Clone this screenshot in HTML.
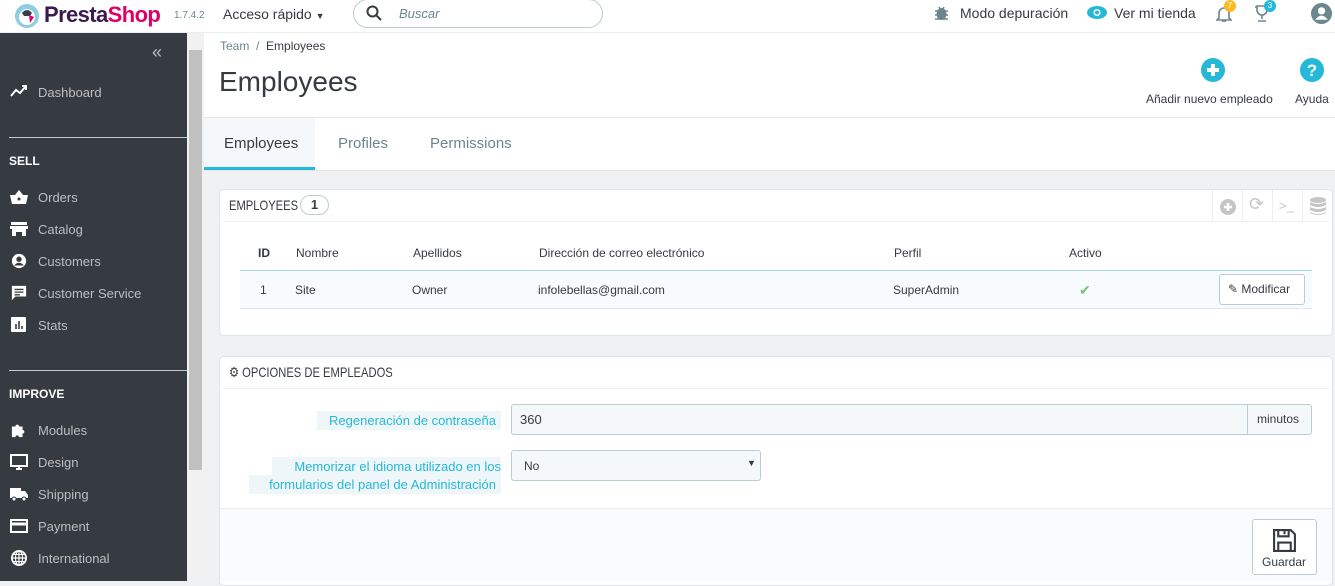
<!DOCTYPE html>
<html><head><meta charset="utf-8"><style>
*{box-sizing:border-box;margin:0;padding:0}
body{width:1335px;height:581px;overflow:hidden;font-family:"Liberation Sans",sans-serif;background:#eff1f2;color:#363a41;position:relative;font-size:13px}
.hdr{position:absolute;left:0;top:0;width:1335px;height:33px;background:#fff;border-bottom:1px solid #eee}
.abs{position:absolute;white-space:nowrap}
.side{position:absolute;left:0;top:33px;width:187px;height:548px;background:#363a41;color:#bebebe}
.side .it{position:absolute;left:10px;font-size:13px;color:#bebebe;display:flex;align-items:center}
.side .it i{display:inline-block;width:18px;height:16px;margin-right:10px;position:relative}
.side .sec{position:absolute;left:9px;color:#fff;font-weight:bold;font-size:12px}
.side hr{position:absolute;left:9px;width:178px;border:0;border-top:1px solid #bbcdd2}
.sb{position:absolute;left:187px;top:33px;width:17px;height:548px;background:#f1f1f1}
.sb div{position:absolute;left:2px;top:17px;width:13px;height:420px;background:#c1c1c1}
.top{position:absolute;left:204px;top:33px;width:1131px;height:138px;background:#fff}
.panel{position:absolute;background:#fff;border:1px solid #dbe6e9;border-radius:5px}
.th{position:absolute;top:246px;font-size:12px;color:#363a41}
.td{position:absolute;top:283px;font-size:12px;color:#363a41}
.lbl{position:absolute;background:#eef6fa;color:#25b9d7;font-size:13px;text-align:right}
</style></head><body>
<div class="hdr">
  <svg class="abs" style="left:14px;top:3px" width="26" height="26" viewBox="0 0 26 26"><circle cx="13" cy="13" r="12" fill="#8fcde0"/><circle cx="13" cy="14" r="8" fill="#fff"/><path d="M8 10q5-6 10 0l-2 3h-6z" fill="#3b3b4f"/><path d="M15 12l5 2-4 6z" fill="#df0067"/></svg>
  <div class="abs" style="left:44px;top:2px;font-size:22px;font-weight:bold;color:#3b1a4f;letter-spacing:-0.6px">Presta<span style="color:#df0067">Shop</span></div>
  <div class="abs" style="left:174px;top:10px;font-size:10px;color:#6c868e">1.7.4.2</div>
  <div class="abs" style="left:223px;top:6px;font-size:14px;color:#363a41">Acceso rápido <span style="font-size:9px">▼</span></div>
  <div class="abs" style="left:353px;top:-1px;width:250px;height:29px;border:1px solid #bbcdd2;border-radius:15px"></div>
  <svg class="abs" style="left:366px;top:5px" width="16" height="16" viewBox="0 0 16 16"><circle cx="6.5" cy="6.5" r="5" fill="none" stroke="#363a41" stroke-width="2"/><path d="M10 10l5 5" stroke="#363a41" stroke-width="2"/></svg>
  <div class="abs" style="left:399px;top:6px;font-size:13px;font-style:italic;color:#6c868e">Buscar</div>
  <svg class="abs" style="left:934px;top:5px" width="15" height="16" viewBox="0 0 15 16"><ellipse cx="7.5" cy="9" rx="5" ry="6" fill="#6c868e"/><path d="M1 6h13M1 10h13M1 14h13M5 2l1 2M10 2l-1 2" stroke="#6c868e" stroke-width="1.5"/></svg>
  <div class="abs" style="left:960px;top:5px;font-size:14px;color:#363a41">Modo depuración</div>
  <svg class="abs" style="left:1087px;top:6px" width="20" height="13" viewBox="0 0 20 13"><ellipse cx="10" cy="6.5" rx="10" ry="6.5" fill="#25b9d7"/><circle cx="10" cy="6.5" r="3.5" fill="#fff"/><circle cx="10" cy="6.5" r="2" fill="#25b9d7"/></svg>
  <div class="abs" style="left:1114px;top:5px;font-size:14px;color:#363a41">Ver mi tienda</div>
  <svg class="abs" style="left:1216px;top:5px" width="16" height="18" viewBox="0 0 16 18"><path d="M3 13V8a5 5 0 0 1 10 0v5l2 2H1z" fill="none" stroke="#6c868e" stroke-width="1.6"/><path d="M6 16h4" stroke="#6c868e" stroke-width="1.6"/></svg>
  <div class="abs" style="left:1224px;top:0;width:12px;height:12px;border-radius:6px;background:#fbbb22;color:#fff;font-size:8px;text-align:center;line-height:12px">7</div>
  <svg class="abs" style="left:1254px;top:5px" width="16" height="18" viewBox="0 0 16 18"><path d="M3 1h10v4a5 5 0 0 1-10 0z M1 2h2v3M15 2h-2v3M8 10v4M4 16h8" fill="none" stroke="#6c868e" stroke-width="1.6"/></svg>
  <div class="abs" style="left:1264px;top:0;width:12px;height:12px;border-radius:6px;background:#25b9d7;color:#fff;font-size:8px;text-align:center;line-height:12px">3</div>
  <svg class="abs" style="left:1311px;top:3px" width="21" height="21" viewBox="0 0 20 20"><circle cx="10" cy="10" r="10" fill="#6c868e"/><circle cx="10" cy="7.5" r="3.5" fill="#fff"/><path d="M4 16q6-8 12 0" fill="#fff"/></svg>
</div>
<div class="side">
  <div class="abs" style="left:152px;top:9px;color:#bebebe;font-size:18px;letter-spacing:-3px">«</div>
  <div class="it" style="top:51px"><i><svg width="18" height="14" viewBox="0 0 18 14"><path d="M1 12l5-6 4 3 6-7M12 2h4v4" fill="none" stroke="#fff" stroke-width="2"/></svg></i>Dashboard</div>
  <hr style="top:104px">
  <div class="sec" style="top:121px">SELL</div>
  <div class="it" style="top:156px"><i><svg width="18" height="16" viewBox="0 0 18 16"><path d="M0 6h18l-2 9H2z M5 6l4-5 4 5" fill="#fff"/><circle cx="9" cy="10" r="1.5" fill="#363a41"/></svg></i>Orders</div>
  <div class="it" style="top:188px"><i><svg width="18" height="16" viewBox="0 0 18 16"><path d="M1 1h16v3H1zM0 5h18v3H0zM2 8h14v7h-4v-4H6v4H2z" fill="#fff"/></svg></i>Catalog</div>
  <div class="it" style="top:220px"><i><svg width="18" height="16" viewBox="0 0 18 18"><circle cx="9" cy="9" r="8" fill="#fff"/><circle cx="9" cy="7" r="3" fill="#363a41"/><path d="M3.5 14q5.5-6 11 0" fill="#363a41"/></svg></i>Customers</div>
  <div class="it" style="top:252px"><i><svg width="18" height="16" viewBox="0 0 18 18"><path d="M1 1h16v12H5l-4 4z" fill="#fff"/><path d="M4 5h10M4 8h10M4 11h6" stroke="#363a41" stroke-width="1.5"/></svg></i>Customer Service</div>
  <div class="it" style="top:284px"><i><svg width="18" height="16" viewBox="0 0 16 16"><rect width="15" height="15" rx="1" fill="#fff"/><path d="M5 12V7M8 12V4M11 12V9" stroke="#363a41" stroke-width="1.6"/></svg></i>Stats</div>
  <hr style="top:337px">
  <div class="sec" style="top:354px">IMPROVE</div>
  <div class="it" style="top:389px"><i><svg width="18" height="16" viewBox="0 0 18 18"><path d="M1 5h4a2 2 0 1 1 4 0h4v4a2 2 0 1 1 0 4v4H9a2 2 0 1 0-4 0H1z" fill="#fff"/></svg></i>Modules</div>
  <div class="it" style="top:421px"><i><svg width="18" height="16" viewBox="0 0 18 16"><rect x="1" y="1" width="16" height="11" fill="none" stroke="#fff" stroke-width="2"/><path d="M6 15h6M9 12v3" stroke="#fff" stroke-width="2"/></svg></i>Design</div>
  <div class="it" style="top:453px"><i><svg width="18" height="16" viewBox="0 0 18 16"><path d="M0 2h11v10H0zM11 5h4l3 4v3h-7z" fill="#fff"/><circle cx="4" cy="13" r="2" fill="#fff" stroke="#363a41"/><circle cx="14" cy="13" r="2" fill="#fff" stroke="#363a41"/></svg></i>Shipping</div>
  <div class="it" style="top:485px"><i><svg width="18" height="16" viewBox="0 0 18 16"><rect x="1" y="2" width="16" height="12" fill="none" stroke="#fff" stroke-width="2"/><path d="M1 6h16" stroke="#fff" stroke-width="3"/></svg></i>Payment</div>
  <div class="it" style="top:517px"><i><svg width="18" height="16" viewBox="0 0 18 18"><circle cx="9" cy="9" r="8" fill="none" stroke="#fff" stroke-width="2"/><path d="M1 9h16M9 1v16M3 5h12M3 13h12" stroke="#fff" stroke-width="1.3"/><ellipse cx="9" cy="9" rx="4" ry="8" fill="none" stroke="#fff" stroke-width="1.3"/></svg></i>International</div>
</div>
<div class="sb"><div></div></div>
<div class="top">
  <div class="abs" style="left:16px;top:6px;font-size:12px;color:#6c868e">Team &nbsp;/ &nbsp;<span style="color:#363a41">Employees</span></div>
  <div class="abs" style="left:15px;top:33px;font-size:28px;color:#363a41">Employees</div>
  <svg class="abs" style="left:997px;top:25px" width="24" height="24" viewBox="0 0 24 24"><circle cx="12" cy="12" r="12" fill="#25b9d7"/><path d="M12 6v12M6 12h12" stroke="#fff" stroke-width="4"/></svg>
  <div class="abs" style="left:942px;top:59px;font-size:12px">Añadir nuevo empleado</div>
  <svg class="abs" style="left:1096px;top:25px" width="24" height="24" viewBox="0 0 24 24"><circle cx="12" cy="12" r="12" fill="#25b9d7"/><text x="12" y="18" text-anchor="middle" font-family="Liberation Sans" font-weight="bold" font-size="17" fill="#fff">?</text></svg>
  <div class="abs" style="left:1091px;top:59px;font-size:12px">Ayuda</div>
  <div class="abs" style="left:0;top:84px;width:1131px;border-top:1px solid #e5e5e5"></div>
  <div class="abs" style="left:0;top:85px;width:111px;height:53px;background:#f4f8fb;border-bottom:4px solid #25b9d7"></div>
  <div class="abs" style="left:20px;top:102px;font-size:15px;color:#363a41">Employees</div>
  <div class="abs" style="left:134px;top:102px;font-size:15px;color:#6c868e">Profiles</div>
  <div class="abs" style="left:226px;top:102px;font-size:15px;color:#6c868e">Permissions</div>
  <div class="abs" style="left:0;top:137px;width:1131px;border-top:1px solid #e5e5e5"></div>
</div>
<div class="panel" style="left:219px;top:189px;width:1114px;height:147px"></div>
<div class="abs" style="left:229px;top:197px;font-size:14px;transform:scaleX(0.8);transform-origin:left">EMPLOYEES</div>
<div class="abs" style="left:300px;top:195px;width:29px;height:20px;border:1px solid #bbcdd2;border-radius:10px;text-align:center;font-weight:bold;font-size:13px;line-height:18px">1</div>
<div class="abs" style="left:223px;top:221px;width:1106px;border-top:1px solid #eee"></div>
<div class="abs" style="left:1212px;top:190px;width:1px;height:31px;background:#eee"></div>
<div class="abs" style="left:1242px;top:190px;width:1px;height:31px;background:#eee"></div>
<div class="abs" style="left:1272px;top:190px;width:1px;height:31px;background:#eee"></div>
<div class="abs" style="left:1302px;top:190px;width:1px;height:31px;background:#eee"></div>
<svg class="abs" style="left:1220px;top:199px" width="16" height="16" viewBox="0 0 16 16"><circle cx="8" cy="8" r="8" fill="#c5c5c5"/><path d="M8 4v8M4 8h8" stroke="#fff" stroke-width="2.5"/></svg>
<div class="abs" style="left:1249px;top:194px;font-size:18px;color:#c5c5c5">⟳</div>
<div class="abs" style="left:1279px;top:198px;font-size:13px;color:#c5c5c5">&gt;_</div>
<svg class="abs" style="left:1310px;top:197px" width="16" height="19" viewBox="0 0 16 19"><ellipse cx="8" cy="3" rx="8" ry="3" fill="#c5c5c5"/><path d="M0 5q8 4 16 0v3q-8 4-16 0zM0 10q8 4 16 0v3q-8 4-16 0zM0 15q8 4 16 0v1q-8 4-16 0z" fill="#c5c5c5"/></svg>
<div class="th" style="left:258px;font-weight:bold">ID</div>
<div class="th" style="left:296px">Nombre</div>
<div class="th" style="left:413px">Apellidos</div>
<div class="th" style="left:539px">Dirección de correo electrónico</div>
<div class="th" style="left:894px">Perfil</div>
<div class="th" style="left:1069px">Activo</div>
<div class="abs" style="left:240px;top:270px;width:1072px;height:39px;background:#f8fbfd;border-top:1px solid #a6dbe8;border-bottom:1px solid #e5e5e5"></div>
<div class="td" style="left:260px">1</div>
<div class="td" style="left:295px">Site</div>
<div class="td" style="left:412px">Owner</div>
<div class="td" style="left:538px">infolebellas@gmail.com</div>
<div class="td" style="left:893px">SuperAdmin</div>
<div class="abs" style="left:1079px;top:282px;color:#72c279;font-size:14px">✔</div>
<div class="abs" style="left:1219px;top:274px;width:86px;height:31px;background:#fff;border:1px solid #bbcdd2;border-radius:3px;font-size:12px;line-height:29px;padding-left:8px">✎ Modificar</div>
<div class="panel" style="left:219px;top:356px;width:1114px;height:230px"></div>
<div class="abs" style="left:229px;top:364px;font-size:14px;transform:scaleX(0.8);transform-origin:left">⚙ OPCIONES DE EMPLEADOS</div>
<div class="abs" style="left:223px;top:388px;width:1106px;border-top:1px solid #eee"></div>
<div class="lbl" style="left:317px;top:411px;width:184px;height:19px;line-height:19px;padding-right:5px">Regeneración de contraseña</div>
<div class="abs" style="left:511px;top:404px;width:801px;height:31px;background:#f5f8f9;border:1px solid #bbcdd2;border-radius:3px"></div>
<div class="abs" style="left:1247px;top:405px;width:1px;height:29px;background:#bbcdd2"></div>
<div class="abs" style="left:520px;top:412px;font-size:13px">360</div>
<div class="abs" style="left:1257px;top:412px;font-size:12px">minutos</div>
<div class="lbl" style="left:272px;top:457px;width:229px;height:19px;line-height:19px;padding-right:0">Memorizar el idioma utilizado en los</div>
<div class="lbl" style="left:249px;top:475px;width:252px;height:19px;line-height:19px;padding-right:5px">formularios del panel de Administración</div>
<div class="abs" style="left:511px;top:450px;width:250px;height:31px;background:#f5f8f9;border:1px solid #bbcdd2;border-radius:3px"></div>
<div class="abs" style="left:524px;top:459px;font-size:12px">No</div>
<div class="abs" style="left:747px;top:458px;font-size:9px">▼</div>
<div class="abs" style="left:220px;top:508px;width:1112px;height:73px;background:#fafbfc;border-top:1px solid #eee"></div>
<div class="abs" style="left:1252px;top:519px;width:65px;height:56px;background:#fff;border:1px solid #bbcdd2;border-radius:3px"></div>
<svg class="abs" style="left:1272px;top:528px" width="25" height="25" viewBox="0 0 24 24"><path d="M2 2h16l4 4v16H2z" fill="none" stroke="#363a41" stroke-width="2"/><path d="M6 2v6h10V2M12 3v3M6 22v-8h12v8" fill="none" stroke="#363a41" stroke-width="2"/></svg>
<div class="abs" style="left:1262px;top:555px;font-size:12px">Guardar</div>
</body></html>
